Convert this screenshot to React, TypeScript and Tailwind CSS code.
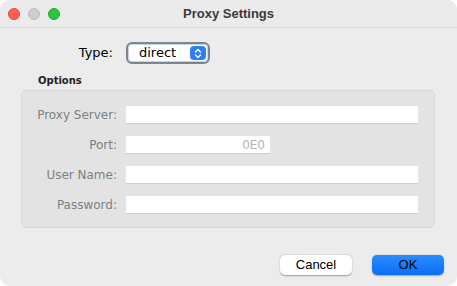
import React from "react";

const lucida = { fontFamily: '"DejaVu Sans", "Noto Sans", sans-serif' };
const helv = { fontFamily: '"Liberation Sans", Arial, sans-serif' };

function Field({ label, width, value }: { label: string; width?: string; value?: string }) {
  return (
    <div className="flex items-center h-[18px]">
      <div className="w-[95px] text-right text-[12px] text-[#808080]" style={lucida}>
        {label}
      </div>
      <div
        className={`ml-[9px] h-[18px] bg-white border-b border-[#cfcfcf] flex items-center justify-end pr-[5px] text-[12px] text-[#b4b4b4] ${width ?? "flex-1"}`}
        style={lucida}
      >
        {value}
      </div>
    </div>
  );
}

export default function App() {
  return (
    <div className="w-[457px] h-[286px] bg-white">
      <div className="w-full h-full rounded-[10px] bg-[#ececec] overflow-hidden flex flex-col">
        <div className="h-[28px] shrink-0 grid grid-cols-[1fr_auto_1fr] items-center border-b border-[#d6d6d6] bg-[#ebebeb]">
          <div className="flex items-center gap-[8px] pl-[8px] pt-[1px]">
            <span className="w-[12px] h-[12px] rounded-full bg-[#fe5f57] border border-[#e2463f]" />
            <span className="w-[12px] h-[12px] rounded-full bg-[#cecece] border border-[#bdbdbd]" />
            <span className="w-[12px] h-[12px] rounded-full bg-[#2ac840] border border-[#1fa82f]" />
          </div>
          <div className="text-[13px] font-bold text-[#3a3a3a]" style={helv}>
            Proxy Settings
          </div>
          <div />
        </div>

        <div className="flex items-center mt-[14px] h-[22px]">
          <div className="w-[113px] text-right text-[13px] text-black" style={lucida}>
            Type:
          </div>
          <div className="ml-[13px] w-[84px] h-[22px] rounded-[6px] border-2 border-[#7a8694] bg-white flex items-center shadow-[inset_0_0_0_1px_#c9d3df]">
            <span className="flex-1 pl-[11px] text-[13px] text-black" style={lucida}>
              direct
            </span>
            <span className="mr-[2px] w-[16px] h-[14px] rounded-[4px] bg-[#2d7ff5] flex items-center justify-center">
              <svg width="8" height="11" viewBox="0 0 8 11" fill="none" stroke="white" strokeWidth="1.4" strokeLinecap="round" strokeLinejoin="round">
                <path d="M1.5 4 L4 1.5 L6.5 4" />
                <path d="M1.5 7 L4 9.5 L6.5 7" />
              </svg>
            </span>
          </div>
        </div>

        <div className="mt-[9px] pl-[38px] h-[14px] flex items-center text-[10px] font-bold text-[#222]" style={lucida}>
          Options
        </div>

        <div className="ml-[21px] mt-[3px] w-[414px] h-[138px] rounded-[5px] bg-[#e3e3e3] border border-[#d8d8d8] flex flex-col gap-[12px] pt-[15px] pr-[16px]">
          <Field label="Proxy Server:" />
          <Field label="Port:" width="w-[144px]" value="0E0" />
          <Field label="User Name:" />
          <Field label="Password:" />
        </div>

        <div className="flex justify-end gap-[20px] mt-[27px] pr-[13px]">
          <button
            className="w-[72px] h-[20px] rounded-[5px] bg-white text-[13px] text-black shadow-[0_0.5px_1.5px_rgba(0,0,0,0.35)] flex items-center justify-center"
            style={helv}
          >
            Cancel
          </button>
          <button
            className="w-[72px] h-[20px] rounded-[5px] bg-gradient-to-b from-[#2a8cff] to-[#0a6ef5] text-[13px] text-black shadow-[0_0.5px_1.5px_rgba(0,0,0,0.3)] flex items-center justify-center"
            style={helv}
          >
            OK
          </button>
        </div>
      </div>
    </div>
  );
}
